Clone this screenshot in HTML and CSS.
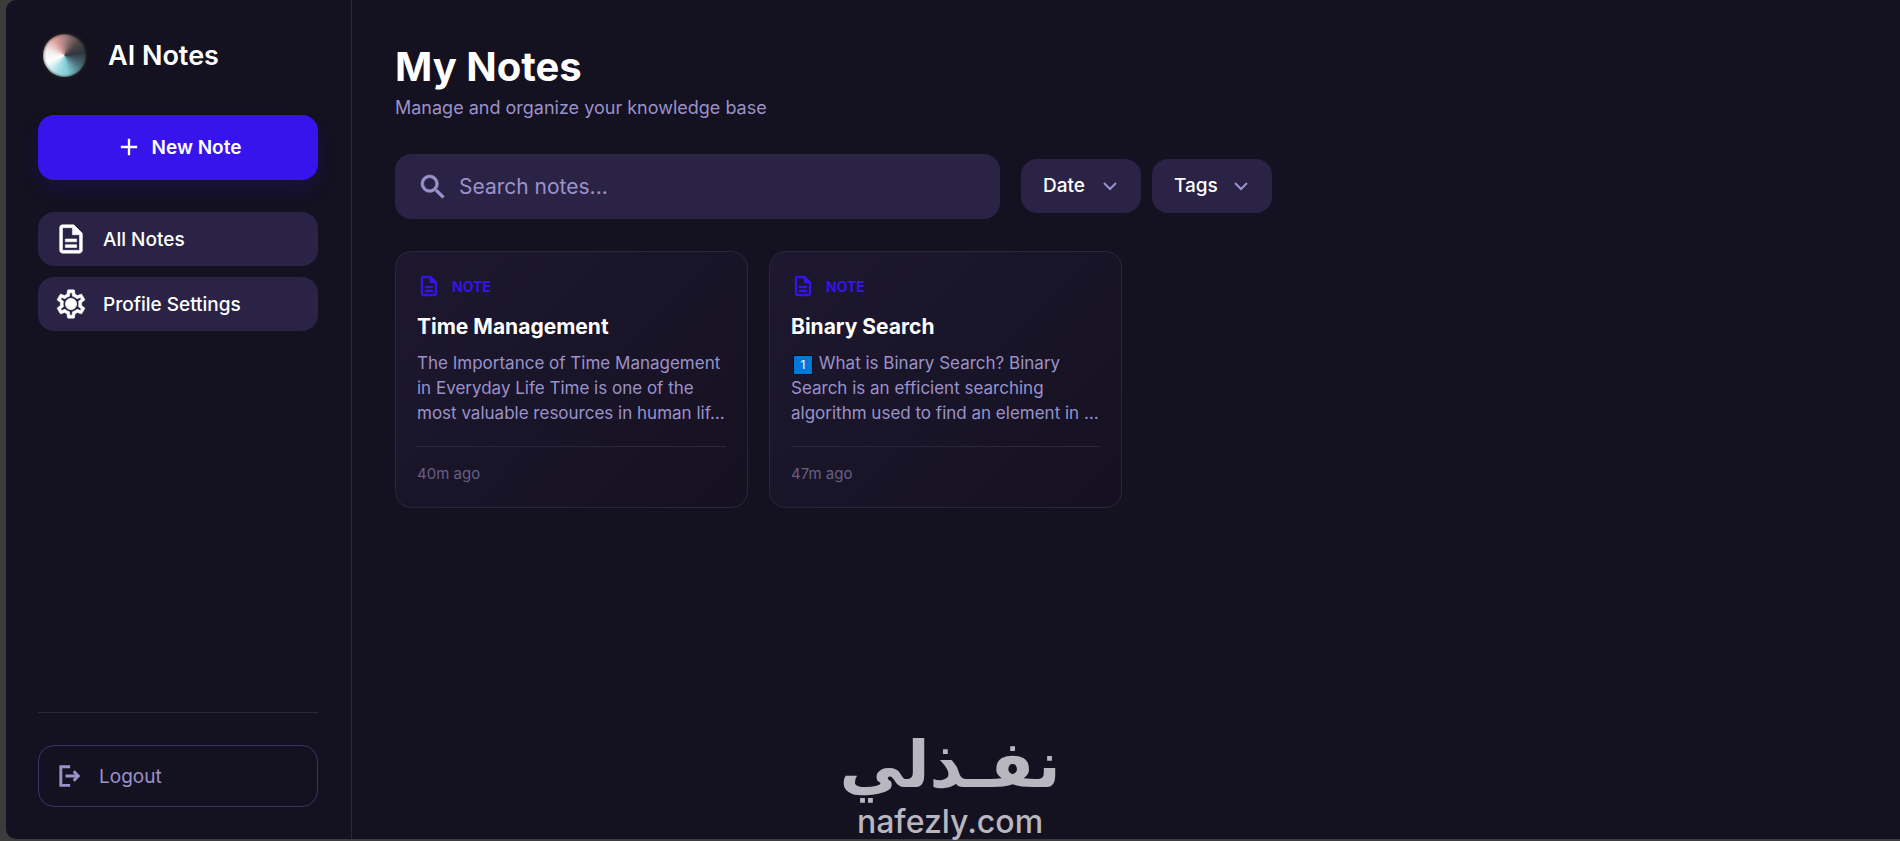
FILE: index.html
```
<!DOCTYPE html>
<html lang="en">
<head>
  <meta charset="UTF-8">
  <meta name="viewport" content="width=device-width, initial-scale=1.0">
  <title>AI Notes</title>
  <link rel="stylesheet" href="styles.css">
</head>
<body>
  <div class="app">
    <aside class="sidebar">
      <div class="brand">
        <span class="brand-logo"></span>
        <span class="brand-name">AI Notes</span>
      </div>

      <button class="new-note" type="button">
        <svg width="28" height="28" viewBox="0 0 24 24" fill="currentColor"><path d="M19 13h-6v6h-2v-6H5v-2h6V5h2v6h6z"/></svg>
        New Note
      </button>

      <nav class="menu">
        <a class="menu-item" href="#notes">
          <svg width="34" height="34" viewBox="0 0 24 24" fill="currentColor" stroke="currentColor" stroke-width=".4"><path d="M8 16h8v2H8zm0-4h8v2H8zm6-10H6c-1.100 0-2 .9-2 2v16c0 1.100.89 2 1.990 2H18c1.100 0 2-.9 2-2V8zm4 18H6V4h7v5h5z"/></svg>
          All Notes
        </a>
        <a class="menu-item" href="#settings">
          <svg width="34" height="34" viewBox="0 0 24 24" fill="currentColor" stroke="currentColor" stroke-width=".4"><path d="M19.430 12.980c.04-.32.07-.64.07-.98s-.03-.66-.07-.98l2.110-1.650c.19-.15.24-.42.12-.64l-2-3.460c-.12-.22-.39-.3-.61-.22l-2.490 1c-.52-.4-1.080-.73-1.690-.98l-.38-2.650C14.460 2.180 14.250 2 14 2h-4c-.25 0-.46.18-.49.42l-.38 2.650c-.61.25-1.170.59-1.690.98l-2.490-1c-.23-.09-.49 0-.61.22l-2 3.460c-.13.22-.07.49.12.64l2.110 1.650c-.04.32-.07.65-.07.98s.03.66.07.98l-2.110 1.650c-.19.15-.24.42-.12.64l2 3.460c.12.22.39.3.61.22l2.490-1c.52.4 1.080.73 1.690.98l.38 2.650c.03.24.24.42.49.42h4c.25 0 .46-.18.49-.42l.38-2.650c.61-.25 1.170-.59 1.690-.98l2.490 1c.23.09.49 0 .61-.22l2-3.460c.12-.22.07-.49-.12-.64zm-1.980-1.710c.04.31.05.52.05.73s-.02.43-.05.73l-.14 1.130.89.7 1.080.84-.7 1.210-1.270-.51-1.040-.42-.9.68c-.43.32-.84.56-1.250.73l-1.060.43-.16 1.130-.2 1.350h-1.400l-.19-1.350-.16-1.130-1.060-.43c-.43-.18-.83-.41-1.230-.71l-.91-.7-1.060.43-1.270.51-.7-1.210 1.080-.84.89-.7-.14-1.130c-.03-.31-.05-.54-.05-.74s.02-.43.05-.73l.14-1.130-.89-.7-1.080-.84.7-1.210 1.270.51 1.040.42.9-.68c.43-.32.84-.56 1.250-.73l1.060-.43.16-1.130.2-1.350h1.390l.19 1.350.16 1.130 1.060.43c.43.18.83.41 1.230.71l.91.7 1.060-.43 1.270-.51.7 1.210-1.070.85-.89.7z"/><circle cx="12" cy="12" r="4"/></svg>
          Profile Settings
        </a>
      </nav>

      <div class="sidebar-footer">
        <button class="logout" type="button">
          <svg width="28" height="28" viewBox="0 0 24 24" fill="none" stroke="currentColor" stroke-width="2.500"><path d="M13 4H5v16h8"/><path d="M9 12h11M16 8l4 4-4 4"/></svg>
          Logout
        </button>
      </div>
    </aside>

    <main class="content">
      <h1>My Notes</h1>
      <p class="subtitle">Manage and organize your knowledge base</p>

      <div class="toolbar">
        <label class="search">
          <svg width="32" height="32" viewBox="0 0 24 24" fill="currentColor" stroke="currentColor" stroke-width=".5"><path d="M15.500 14h-.79l-.28-.27A6.470 6.470 0 0 0 16 9.500 6.500 6.500 0 1 0 9.500 16c1.610 0 3.090-.59 4.230-1.570l.27.28v.79l5 4.990L20.490 19zm-6 0C7.010 14 5 11.990 5 9.500S7.010 5 9.500 5 14 7.010 14 9.500 11.990 14 9.500 14"/></svg>
          <input type="text" placeholder="Search notes..." aria-label="Search notes">
        </label>
        <div class="filters">
          <div class="filter">
            <select aria-label="Date"><option>Date</option></select>
            <svg width="14" height="9" viewBox="0 0 14 9" fill="none" stroke="currentColor" stroke-width="2"><path d="M1 1l6 6 6-6"/></svg>
          </div>
          <div class="filter">
            <select aria-label="Tags"><option>Tags</option></select>
            <svg width="14" height="9" viewBox="0 0 14 9" fill="none" stroke="currentColor" stroke-width="2"><path d="M1 1l6 6 6-6"/></svg>
          </div>
        </div>
      </div>

      <div class="cards">
        <article class="card">
          <div class="card-type">
            <svg width="24" height="24" viewBox="0 0 24 24" fill="currentColor" stroke="currentColor" stroke-width=".4"><path d="M8 16h8v2H8zm0-4h8v2H8zm6-10H6c-1.100 0-2 .9-2 2v16c0 1.100.89 2 1.990 2H18c1.100 0 2-.9 2-2V8zm4 18H6V4h7v5h5z"/></svg>
            NOTE
          </div>
          <h2>Time Management</h2>
          <p class="card-text">The Importance of Time Management in Everyday Life Time is one of the most valuable resources in human lif…</p>
          <div class="card-time">40m ago</div>
        </article>

        <article class="card">
          <div class="card-type">
            <svg width="24" height="24" viewBox="0 0 24 24" fill="currentColor" stroke="currentColor" stroke-width=".4"><path d="M8 16h8v2H8zm0-4h8v2H8zm6-10H6c-1.100 0-2 .9-2 2v16c0 1.100.89 2 1.990 2H18c1.100 0 2-.9 2-2V8zm4 18H6V4h7v5h5z"/></svg>
            NOTE
          </div>
          <h2>Binary Search</h2>
          <p class="card-text"><span class="keycap">1</span> What is Binary Search? Binary Search is an efficient searching algorithm used to find an element in …</p>
          <div class="card-time">47m ago</div>
        </article>
      </div>
    </main>
  </div>

  <div class="watermark">
    <span class="watermark-ar" lang="ar" dir="rtl">نفـذلي</span>
    <span class="watermark-en">nafezly.com</span>
  </div>
</body>
</html>
```
FILE: styles.css
```
:root {
  --bg: #141120;
  --panel: #2a2346;
  --primary: #3713ec;
  --muted: #9b92c9;
  --line: #2b273b;
}
* {
  box-sizing: border-box;
}
body {
  margin: 0;
  background: #3d3c3c;
  color: #fff;
  font-family: Inter, sans-serif;
  font-size: 18px;
}
svg {
  display: block;
  flex: none;
}
button, input, select {
  font-family: inherit;
}
.app {
  display: flex;
  min-height: calc(100vh - 2px);
  margin: 0 0 2px 6px;
  background: var(--bg);
  border-radius: 10px 0 0 10px;
}

/* sidebar */
.sidebar {
  display: flex;
  flex-direction: column;
  flex: none;
  width: 346px;
  padding: 28px 33px 32px 32px;
  border-right: 1px solid var(--line);
}
.brand {
  display: flex;
  align-items: center;
  gap: 22px;
  height: 54px;
  margin-bottom: 33px;
}
.brand-logo {
  width: 43px;
  height: 43px;
  margin-left: 5px;
  border-radius: 50%;
  background: conic-gradient(#a98181, #514849 45deg, #30353f 80deg, #4c7480 125deg, #83cbd4 170deg, #a5dfe6 205deg, #fff 250deg, #f4eeee 285deg, #dc9d9b 330deg, #a98181);
  box-shadow: 0 0 4px 1px #24221f, inset 0 0 3px #24221f;
}
.brand-name {
  font-size: 27px;
  font-weight: 600;
}
.new-note {
  display: flex;
  align-items: center;
  justify-content: center;
  gap: 9px;
  height: 65px;
  padding-bottom: 2px;
  border: 0;
  border-radius: 16px;
  background: var(--primary);
  box-shadow: 0 10px 20px rgba(55, 19, 236, 0.15);
  color: #fff;
  font-size: 19px;
  font-weight: 600;
  cursor: pointer;
}
.menu {
  display: flex;
  flex-direction: column;
  gap: 11px;
  margin-top: 32px;
}
.menu-item {
  display: flex;
  align-items: center;
  gap: 15px;
  height: 54px;
  padding: 0 16px;
  border-radius: 16px;
  background: var(--panel);
  color: #fff;
  font-size: 19px;
  font-weight: 500;
  text-decoration: none;
}
.sidebar-footer {
  margin-top: auto;
  padding-top: 32px;
  border-top: 1px solid var(--line);
}
.logout {
  display: flex;
  align-items: center;
  gap: 16px;
  width: 100%;
  height: 62px;
  padding: 0 16px;
  border: 1px solid #3b3267;
  border-radius: 16px;
  background: none;
  color: var(--muted);
  font-size: 19px;
  cursor: pointer;
}

/* main area */
.content {
  flex: 1;
  min-width: 0;
  padding: 40px 43px;
}
h1 {
  margin: 0;
  font-size: 40px;
  line-height: 54px;
}
.subtitle {
  margin: 0;
  color: var(--muted);
  line-height: 27px;
}
.toolbar {
  display: flex;
  align-items: center;
  gap: 21px;
  margin-top: 33px;
}
.search {
  display: flex;
  align-items: center;
  gap: 10px;
  flex: 0 1 605px;
  height: 65px;
  padding: 0 22px;
  border-radius: 16px;
  background: var(--panel);
  color: var(--muted);
}
.search input {
  flex: 1;
  min-width: 0;
  padding: 0;
  border: 0;
  outline: 0;
  background: none;
  color: #fff;
  font-size: 21px;
}
.search input::placeholder {
  color: var(--muted);
}
.filters {
  display: flex;
  gap: 11px;
  padding-bottom: 2px;
}
.filter {
  position: relative;
}
.filter select {
  display: block;
  appearance: none;
  width: 120px;
  height: 54px;
  padding: 0 22px;
  border: 0;
  border-radius: 16px;
  background: var(--panel);
  color: #fff;
  font-size: 19px;
  font-weight: 500;
  cursor: pointer;
}
.filter svg {
  position: absolute;
  top: 23px;
  right: 24px;
  color: var(--muted);
  pointer-events: none;
}

/* note cards */
.cards {
  display: flex;
  flex-wrap: wrap;
  gap: 21px;
  margin-top: 32px;
}
.card {
  width: 353px;
  padding: 22px 21px;
  border: 1px solid var(--line);
  border-radius: 16px;
  background: linear-gradient(135deg, #1d182f, #151121);
}
.card-type {
  display: flex;
  align-items: center;
  gap: 11px;
  height: 24px;
  color: var(--primary);
  font-size: 14px;
  font-weight: 700;
}
h2 {
  margin: 14px 0 9px;
  font-size: 21px;
  line-height: 30px;
}
.card-text {
  margin: 0;
  color: var(--muted);
  font-size: 17px;
  line-height: 25px;
}
.keycap {
  display: inline-block;
  width: 18px;
  height: 18px;
  margin: 0 2px 0 3px;
  background: #0078d7;
  outline: 1px solid #06101c;
  color: #fff;
  font-size: 12px;
  line-height: 18px;
  text-align: center;
}
.card-time {
  margin-top: 20px;
  padding-top: 16px;
  border-top: 1px solid var(--line);
  color: #665f86;
  font-size: 15px;
  line-height: 22px;
}

.watermark {
  position: absolute;
  bottom: 0;
  left: 50%;
  display: flex;
  flex-direction: column;
  align-items: center;
  transform: translateX(-50%);
  color: #b8b6bf;
  pointer-events: none;
}
.watermark-ar {
  font: bold 65px/76px "DejaVu Sans", sans-serif;
}
.watermark-en {
  font: 500 32px/38px Inter, sans-serif;
}
```
